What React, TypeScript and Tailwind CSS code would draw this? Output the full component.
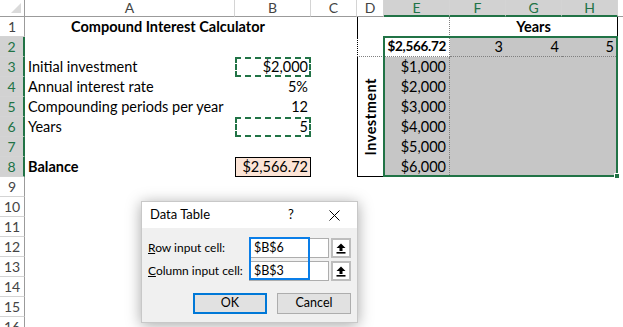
import React from "react";

type HeadProps = { label: string; selected?: boolean };

const ColHead: React.FC<HeadProps> = ({ label, selected }) => (
  <div
    className={`flex items-center justify-center border-r border-[#d4d4d4] text-[14px] leading-none ${
      selected
        ? "bg-[#d2d2d2] text-[#217346] border-b-2 border-b-[#217346]"
        : "bg-white text-[#444] border-b border-b-[#9b9b9b]"
    }`}
  >
    {label}
  </div>
);

const RowHead: React.FC<HeadProps> = ({ label, selected }) => (
  <div
    className={`flex items-center justify-center border-b border-[#d4d4d4] text-[14px] leading-none ${
      selected
        ? "bg-[#d2d2d2] text-[#217346] border-r-2 border-r-[#217346]"
        : "bg-white text-[#444] border-r border-r-[#9b9b9b]"
    }`}
  >
    {label}
  </div>
);

const UpArrow = () => (
  <svg width="10" height="11" viewBox="0 0 10 11">
    <path d="M5 0.5 L9.5 5 L6.5 5 L6.5 8 L3.5 8 L3.5 5 L0.5 5 Z" fill="#000" />
    <rect x="0.5" y="9" width="9" height="1.6" fill="#000" />
  </svg>
);

const App: React.FC = () => {
  const cols = ["A", "B", "C", "D", "E", "F", "G", "H"];
  const amounts = ["$1,000", "$2,000", "$3,000", "$4,000", "$5,000", "$6,000"];
  const inputs: [string, string][] = [
    ["Initial investment", "$2,000"],
    ["Annual interest rate", "5%"],
    ["Compounding periods per year", "12"],
    ["Years", "5"],
    ["", ""],
    ["Balance", "$2,566.72"],
  ];
  const gridCls =
    "grid grid-cols-[25px_210px_76px_46px_27px_66px_56px_56px_56px_1fr] grid-rows-[17px_repeat(16,20px)]";

  return (
    <div className="relative w-[623px] h-[327px] overflow-hidden bg-white font-['Lato',sans-serif] text-[14.5px] text-black">
      <div className={gridCls}>
        {/* header row */}
        <div className="relative bg-white border-r border-b border-[#9b9b9b]">
          <div className="absolute right-[3px] bottom-[3px] w-0 h-0 border-l-[10px] border-l-transparent border-b-[10px] border-b-[#dadada]" />
        </div>
        {cols.map((c) => (
          <ColHead key={c} label={c} selected={["E", "F", "G", "H"].includes(c)} />
        ))}
        <div className="bg-white border-b border-[#9b9b9b]" />

        {/* row 1 */}
        <RowHead label="1" />
        <div className="col-span-2 flex items-center justify-center font-bold">
          Compound Interest Calculator
        </div>
        <div />
        <div className="border-l border-black" />
        <div className="border-r border-dotted border-r-[#808080]" />
        <div className="col-span-3 flex items-center justify-center font-bold border-r border-black">
          Years
        </div>
        <div />

        {/* row 2 */}
        <RowHead label="2" selected />
        <div />
        <div />
        <div />
        <div className="border-l border-black border-b border-dotted border-b-[#808080]" />
        <div className="flex items-center justify-end pr-[3px] text-[13.5px] font-bold tracking-[-0.3px] bg-white border-r border-b border-dotted border-[#808080]">
          $2,566.72
        </div>
        <div className="flex items-center justify-end pr-[3px] bg-[#c6c6c6] border-b border-dotted border-[#808080]">3</div>
        <div className="flex items-center justify-end pr-[3px] bg-[#c6c6c6] border-b border-dotted border-[#808080]">4</div>
        <div className="flex items-center justify-end pr-[3px] bg-[#c6c6c6] border-b border-dotted border-b-[#808080] border-r border-r-black">5</div>
        <div />

        {/* rows 3-8 */}
        {inputs.map(([label, value], i) => {
          const row = i + 3;
          const last = row === 8;
          return (
            <React.Fragment key={row}>
              <RowHead label={String(row)} selected />
              <div className={`flex items-center pl-[3px] ${last ? "font-bold" : ""}`}>{label}</div>
              <div
                className={`flex items-center justify-end ${
                  row === 3 || row === 6
                    ? "border-2 border-dashed border-[#217346] pr-[1px]"
                    : last
                    ? "bg-[#fce4d6] border border-black pr-[2px]"
                    : "pr-[3px]"
                }`}
              >
                {value}
              </div>
              <div />
              {row === 3 && (
                <div className="row-span-6 flex items-center justify-center border-l border-b border-black">
                  <span className="[writing-mode:vertical-rl] rotate-180 font-bold tracking-[0.5px]">
                    Investment
                  </span>
                </div>
              )}
              <div
                className={`flex items-center justify-end pr-[3px] bg-[#c6c6c6] border-r border-dotted border-r-[#808080] ${
                  last ? "border-b border-b-black" : ""
                }`}
              >
                {amounts[i]}
              </div>
              <div className={`bg-[#c6c6c6] ${last ? "border-b border-black" : ""}`} />
              <div className={`bg-[#c6c6c6] ${last ? "border-b border-black" : ""}`} />
              <div className={`bg-[#c6c6c6] border-r border-black ${last ? "border-b" : ""}`} />
              <div />
            </React.Fragment>
          );
        })}

        {/* rows 9-16 */}
        {Array.from({ length: 8 }, (_, i) => i + 9).map((row) => (
          <React.Fragment key={row}>
            <RowHead label={String(row)} />
            <div className="col-span-9" />
          </React.Fragment>
        ))}
      </div>

      {/* selection overlay */}
      <div className={`absolute inset-0 pointer-events-none ${gridCls}`}>
        <div className="relative col-start-6 col-span-4 row-start-3 row-span-7 -ml-px -mt-px border-2 border-[#217346]">
          <div className="absolute -right-[4px] -bottom-[4px] w-[6px] h-[6px] bg-[#217346] border border-white" />
        </div>
      </div>

      {/* Data Table dialog */}
      <div className="absolute left-[141px] top-[201px] w-[217px] h-[122px] flex flex-col bg-[#f0f0f0] border border-[#c8c8c8] shadow-[0_2px_14px_rgba(0,0,0,0.35)] text-[12px] text-black whitespace-nowrap">
        <div className="h-[26px] flex items-center bg-white pl-[8px] text-[13px]">
          <span className="flex-1">Data Table</span>
          <span className="w-[20px] text-center mr-[28px]">?</span>
          <svg width="11" height="11" viewBox="0 0 11 11" className="mr-[17px]">
            <path d="M0.5 0.5 L10.5 10.5 M10.5 0.5 L0.5 10.5" stroke="#000" strokeWidth="1" />
          </svg>
        </div>
        <div className="relative flex-1 flex flex-col pt-[10px] px-[6px]">
          <div className="flex items-center h-[20px]">
            <span className="w-[101px]">
              <span className="underline">R</span>ow input cell:
            </span>
            <div className="w-[80px] h-[20px] flex items-center bg-white border border-[#adadad] pl-[4px] text-[12.5px]">$B$6</div>
            <div className="ml-[2px] w-[20px] h-[20px] flex items-center justify-center bg-white border-2 border-[#bdbdbd]">
              <UpArrow />
            </div>
          </div>
          <div className="flex items-center h-[20px] mt-[3px]">
            <span className="w-[101px]">
              <span className="underline">C</span>olumn input cell:
            </span>
            <div className="w-[80px] h-[20px] flex items-center bg-white border border-[#adadad] pl-[4px] text-[12.5px]">$B$3</div>
            <div className="ml-[2px] w-[20px] h-[20px] flex items-center justify-center bg-white border-2 border-[#bdbdbd]">
              <UpArrow />
            </div>
          </div>
          <div className="flex gap-[10px] mt-[12px] pl-[45px] text-[12.5px]">
            <button className="w-[74px] h-[21px] flex items-center justify-center bg-[#e1e1e1] border-2 border-[#0078d7]">
              OK
            </button>
            <button className="w-[74px] h-[21px] flex items-center justify-center bg-[#e1e1e1] border border-[#adadad]">
              Cancel
            </button>
          </div>
          <div className="absolute left-[107px] top-[9px] w-[61px] h-[43px] border-2 border-[#0a7ee8] pointer-events-none" />
        </div>
      </div>
    </div>
  );
};

export default App;
